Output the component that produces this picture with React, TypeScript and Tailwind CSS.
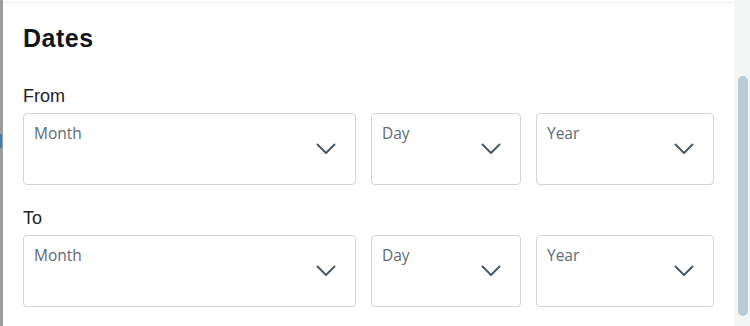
const rows = ['From', 'To'];

function SelectBox({ label, width }: { label: string; width: string }) {
    return (
        <div className={`relative h-[72px] ${width} shrink-0 rounded-[4px] border border-[#cdd6dc] bg-white`}>
            <div
                className="pl-[10px] pt-[9px] text-[15.5px] leading-[20px] text-[#5d6a77]"
                style={{ fontFamily: '"Open Sans", "Liberation Sans", sans-serif' }}
            >
                {label}
            </div>
            <svg
                className="absolute right-[19px] top-1/2 -translate-y-1/2"
                width="20"
                height="12"
                viewBox="0 0 20 12"
                fill="none"
            >
                <path d="M1.5 1.5 L10 10 L18.5 1.5" stroke="#4a5968" strokeWidth="2" strokeLinecap="round" strokeLinejoin="round" />
            </svg>
        </div>
    );
}

export default function App() {
    return (
        <div className="flex h-[326px] w-[750px] overflow-hidden bg-white" style={{ fontFamily: '"Liberation Sans", Arial, sans-serif' }}>
            {/* left edge */}
            <div className="relative w-[3px] shrink-0 bg-[#9d9d9d]">
                <div className="absolute left-0 top-[134px] h-[14px] w-[2px] bg-[#3a7fb0]" />
            </div>

            {/* panel */}
            <div className="flex-1 pt-[2px]">
                <div className="h-full border-t border-[#e9edef] pl-[20px] pr-[20px]">
                    <h2 className="mt-[19px] text-[25px] font-bold leading-[32px] tracking-[0.5px] text-[#14171a]">Dates</h2>
                    {rows.map((row, i) => (
                        <div key={row} className={i === 0 ? 'mt-[30px]' : 'mt-[21px]'}>
                            <div className="text-[18px] leading-[24px] text-[#1d2226]">{row}</div>
                            <div className="mt-[5px] flex gap-[15px]">
                                <SelectBox label="Month" width="w-[333px]" />
                                <SelectBox label="Day" width="w-[150px]" />
                                <SelectBox label="Year" width="w-[178px]" />
                            </div>
                        </div>
                    ))}
                </div>
            </div>

            {/* scrollbar */}
            <div className="relative w-[16px] shrink-0 bg-[#f4f6f6]">
                <div className="absolute left-[4px] top-[76px] h-[240px] w-[10px] rounded-full bg-[#b9cbd5]" />
            </div>
        </div>
    );
}
